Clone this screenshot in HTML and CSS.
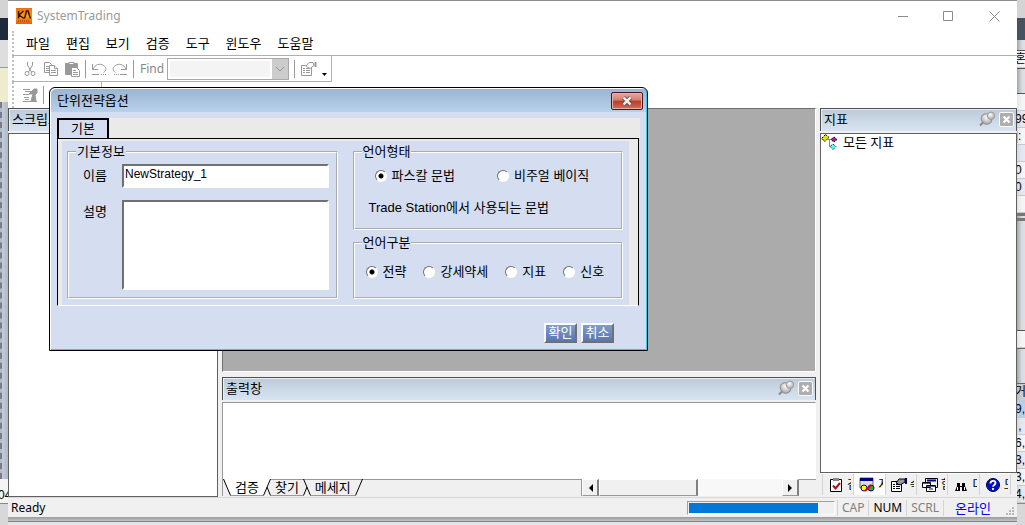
FILE: index.html
```html
<!DOCTYPE html>
<html lang="ko">
<head>
<meta charset="UTF-8">
<meta name="viewport" content="width=device-width, initial-scale=1.0">
<title>SystemTrading</title>
<link rel="stylesheet" href="styles.css">
</head>
<body>
    <svg class="defs" aria-hidden="true">
        <defs>
            <radialGradient id="pinFill" cx="40%" cy="35%" r="70%">
                <stop offset="0" stop-color="#fff"/>
                <stop offset="1" stop-color="#a4a4a4"/>
            </radialGradient>
        </defs>
        <symbol id="pin" viewBox="0 0 17 16">
            <path d="M1 14.500L5 10.500" stroke="#8a8a8a" stroke-width="2"/>
            <ellipse cx="7.500" cy="8" rx="5.500" ry="5" transform="rotate(40 7.500 8)" fill="url(#pinFill)" stroke="#8c8c8c"/>
            <path d="M7 5l4-3 3 5-3 2z" fill="#d4d4d4"/>
            <circle cx="12" cy="4.800" r="3.700" fill="url(#pinFill)" stroke="#9c9c9c"/>
        </symbol>
        <symbol id="closeBox" viewBox="0 0 15 15">
            <rect x=".5" y=".5" width="14" height="14" rx="1.500" fill="#aeaeae" stroke="#fafafa"/>
            <path d="M4.500 4.500l6 6m0-6l-6 6" stroke="#fff" stroke-width="2.200"/>
        </symbol>
    </svg>

    <div class="desktop">
        <div class="backdrop-left" aria-hidden="true">
            <div class="back-gray"></div>
            <div class="back-navy"></div>
            <div class="back-light"></div>
            <div class="back-cream"></div>
            <div class="back-blue"></div>
            <div class="back-cell">04</div>
            <div class="back-foot"></div>
        </div>

        <main class="window">
            <header class="titlebar">
                <svg class="logo" width="16" height="16" viewBox="0 0 16 16">
                    <defs><linearGradient id="logoFill" x2="0" y2="1"><stop offset="0" stop-color="#f06a10"/><stop offset=".5" stop-color="#ff9d10"/><stop offset="1" stop-color="#f05a08"/></linearGradient></defs>
                    <rect width="16" height="16" fill="url(#logoFill)"/>
                    <path d="M2.500 3v7.500M7.500 3L3 7l5 3.500M8.500 10.500l2-7.500h1.500l2.500 7.500" fill="none" stroke="#301808" stroke-width="1.500"/>
                    <path d="M2 13h12" stroke="#803008" stroke-dasharray="1 1"/>
                </svg>
                <h1>SystemTrading</h1>
                <div class="caption-buttons">
                    <button aria-label="Minimize"><svg width="11" height="11"><path d="M1 5.500h10" stroke="#8a8a8a"/></svg></button>
                    <button aria-label="Maximize"><svg width="11" height="11"><path d="M.5 .5h9v9h-9z" fill="none" stroke="#8a8a8a"/></svg></button>
                    <button aria-label="Close"><svg width="11" height="11"><path d="M.5 .5l10 10m0-10l-10 10" stroke="#8a8a8a"/></svg></button>
                </div>
            </header>

            <nav class="menubar">
                <a href="#">파일</a>
                <a href="#">편집</a>
                <a href="#">보기</a>
                <a href="#">검증</a>
                <a href="#">도구</a>
                <a href="#">윈도우</a>
                <a href="#">도움말</a>
            </nav>

            <div class="toolbar toolbar-main">
                <button aria-label="Cut"><svg width="16" height="16" fill="none" stroke="#999"><path d="M5.500 1v3l4 7M10.500 1v3l-4 7"/><circle cx="5" cy="12.500" r="2"/><circle cx="11" cy="12.500" r="2"/></svg></button>
                <button aria-label="Copy"><svg width="16" height="16" fill="#fff" stroke="#999"><path d="M1.500 1.500h5l3 3v7h-8z"/><path d="M3 5.500h3M3 7.500h3M3 9.500h3"/><path d="M6.500 4.500h5l3 3v7h-8z"/><path d="M11.500 4.500v3h3M8 9.500h5M8 11.500h5"/></svg></button>
                <button aria-label="Paste"><svg width="16" height="16" fill="#999" stroke="#999"><path d="M1.500 2.500h12v11h-12z"/><path d="M5 1.500h5v2h-5z" fill="#fff"/><path d="M7.500 6.500h5l3 3v6h-8z" fill="#fff"/><path d="M9 9.500h3M9 11.500h5M9 13.500h5"/></svg></button>
                <span class="divider"></span>
                <button aria-label="Undo"><svg width="16" height="16" fill="none" stroke="#999"><path d="M1.500 3v5.500h5.500M2 8C4 3.500 9 2 12.500 4.500s3 5 0 7M1 13.500h7M10 13.500h1M12 13.500h1M14 13.500h1"/></svg></button>
                <button aria-label="Redo"><svg width="16" height="16" fill="none" stroke="#999"><path d="M14.500 3v5.500H9M14 8C12 3.500 7 2 3.500 4.500s-3 5 0 7M8 13.500h7M6 13.500h1M4 13.500h1M2 13.500h1"/></svg></button>
                <span class="divider"></span>
                <label class="find-label" for="find">Find</label>
                <span class="combo">
                    <select id="find" disabled><option></option></select>
                    <svg width="16" height="20"><path d="M4 8l4 4 4-4" fill="none" stroke="#999"/></svg>
                </span>
                <span class="divider"></span>
                <button aria-label="Properties"><svg width="17" height="16" fill="none" stroke="#999"><path d="M1.500 4.500h10v10h-10zM3 7.500h2M6 7.500h4M3 9.500h2M6 9.500h4M3 11.500h2M6 11.500h4"/><path d="M6 5l3-3.500h4l1 3-4 3-2-1z" fill="#fff"/><path d="M15.500 1v5" stroke-width="2"/></svg></button>
                <button class="more" aria-label="More"><svg width="5" height="3"><path d="M0 0h5L2.500 3z"/></svg></button>
            </div>

            <div class="toolbar toolbar-script">
                <button aria-label="Build"><svg width="16" height="16" fill="none" stroke="#999"><path d="M1 2.500h7M3 4.500h6M1 7.500h6M2 10.500h5M1 14.500h14M3 12.500h4"/><path d="M7 7l5-5h3v4l-2 2 1 6H9l2-7z" fill="#999"/></svg></button>
                <span class="divider"></span>
            </div>

            <div class="workspace">
                <section class="pane script-pane">
                    <header class="pane-title"><h2>스크립트</h2></header>
                    <div class="pane-body"></div>
                </section>

                <div class="center">
                    <div class="mdi"></div>
                    <section class="pane output-pane">
                        <header class="pane-title">
                            <h2>출력창</h2>
                            <button aria-label="Pin"><svg width="17" height="16"><use href="#pin"/></svg></button>
                            <button aria-label="Close"><svg width="15" height="15"><use href="#closeBox"/></svg></button>
                        </header>
                        <div class="pane-body"></div>
                        <div class="output-tabs">
                            <svg width="8" height="17"><path d="M0 0l8 17V0z" fill="#fff"/><path d="M.5 0l7 16.500" stroke="#000"/></svg>
                            <button class="sheet active">검증</button>
                            <svg width="8" height="17"><path d="M0 0h8L0 17z" fill="#fff"/><path d="M7.500 0l-7 16.500M4 8l3.500 8.500" stroke="#000" fill="none"/></svg>
                            <button class="sheet">찾기</button>
                            <svg width="8" height="17"><path d="M.5 0l7 16.500M4 8L.5 16.500" stroke="#000" fill="none"/></svg>
                            <button class="sheet">메세지</button>
                            <svg width="8" height="17"><path d="M7.500 0l-7 16.500" stroke="#000"/></svg>
                            <div class="scrollbar">
                                <button class="raised" aria-label="Scroll left"><svg width="5" height="8"><path d="M5 0v8L1 4z"/></svg></button>
                                <div class="track"><div class="raised thumb"></div></div>
                                <button class="raised" aria-label="Scroll right"><svg width="5" height="8"><path d="M0 0v8l4-4z"/></svg></button>
                            </div>
                        </div>
                    </section>
                </div>

                <section class="pane index-pane">
                    <header class="pane-title">
                        <h2>지표</h2>
                        <button aria-label="Pin"><svg width="17" height="16"><use href="#pin"/></svg></button>
                        <button aria-label="Close"><svg width="15" height="15"><use href="#closeBox"/></svg></button>
                    </header>
                    <div class="pane-body">
                        <a class="tree-root" href="#">
                            <svg width="17" height="17">
                                <path d="M7 5.500h5M8.500 6v6.500h2" stroke="#888" fill="none"/>
                                <path d="M4.500 .5l3.500 3-4 4-3.500-3z" fill="#e8e000" stroke="#000" stroke-dasharray="2 1"/>
                                <path d="M13 3l3 2.500-3 2.500-3-2.500z" fill="#c0178a" stroke="#000" stroke-dasharray="2 1"/>
                                <path d="M12 10l3 2.500-3 3-3-3z" fill="#5ff" stroke="#000" stroke-dasharray="1 1"/>
                            </svg>
                            모든 지표
                        </a>
                    </div>
                    <div class="index-tabs">
                        <button><svg width="16" height="16"><path d="M2.500 2.500h11v12h-11z" fill="#fff" stroke="#000"/><path d="M5 1h6v3H5z" fill="#888"/><path d="M5 8.500l2.500 3L12 6" fill="none" stroke="#b01010" stroke-width="2"/></svg><span>검증</span></button>
                        <button class="active"><svg width="16" height="16"><path d="M1 1h13v10H1z" fill="#ddd" stroke="#666"/><path d="M1 1h13v3H1z" fill="#000080"/><circle cx="5" cy="11" r="3" fill="#ff0" stroke="#00a"/><circle cx="12" cy="11" r="3" fill="#1db030" stroke="#008"/><path d="M6 14l6-6" stroke="#d00" stroke-width="2"/></svg><span>지표</span></button>
                        <button><svg width="16" height="16"><path d="M.5 4.500h10v10H.5z" fill="#fff" stroke="#000"/><path d="M2 7.500h2M5 7.500h4M2 9.500h2M5 9.500h4M2 11.500h2M5 11.500h4" stroke="#000"/><path d="M5 6l3-4h6v3l-5 3z" fill="#999" stroke="#000"/><path d="M15 1v6" stroke="#000080" stroke-width="2"/></svg><span>속성</span></button>
                        <button><svg width="16" height="16"><path d="M3.500 1.500h12v9h-12z" fill="#eee" stroke="#000"/><path d="M5 3.500h9" stroke="#000080" stroke-width="2"/><path d="M.5 5.500h8v5h-8zM4.500 8.500h9v6h-9z" fill="#fff" stroke="#000"/><path d="M1 6.500h7M5 9.500h8" stroke="#557"/><path d="M7 12h4" stroke="#888" stroke-width="2"/></svg><span>함수</span></button>
                        <button><svg width="16" height="16"><path d="M4 6h3v3h2V6h3v3l2 5h-5v-4H7v4H2l2-5z"/><path d="M4.500 10v3M11.500 10v3" stroke="#fff"/></svg><span>디버그</span></button>
                        <button><svg width="16" height="16"><circle cx="8" cy="8" r="6.500" fill="#0010c8" stroke="#000040"/><path d="M5.500 6.500c0-3.500 5-3.500 5-.5 0 2-2.500 1.800-2.500 3.700M8 11v2" fill="none" stroke="#fff" stroke-width="1.800"/></svg><span>도움말</span></button>
                    </div>
                </section>
            </div>

            <footer class="statusbar">
                <span class="status-text">Ready</span>
                <span class="meter"><span class="meter-fill"></span></span>
                <span class="indicator">CAP</span>
                <span class="indicator on">NUM</span>
                <span class="indicator">SCRL</span>
                <span class="indicator online">온라인</span>
                <svg class="grip" width="9" height="9" fill="#b8b8b8"><path d="M6 0h2v2H6zM3 3h2v2H3zM6 3h2v2H6zM0 6h2v2H0zM3 6h2v2H3zM6 6h2v2H6z"/></svg>
            </footer>
        </main>

        <div class="backdrop-right" aria-hidden="true">
            <div class="back-gray"></div>
            <div class="back-slate"></div>
            <div class="back-gap"></div>
            <div class="back-row">혼</div>
            <div class="back-band"></div>
            <div class="back-row"></div>
            <div class="back-row alt">99</div>
            <div class="back-row">|:</div>
            <div class="back-row alt"></div>
            <div class="back-row">0</div>
            <div class="back-row alt">0</div>
            <div class="back-row"></div>
            <div class="back-panel"></div>
            <div class="back-row"></div>
            <div class="back-header"></div>
            <div class="back-row head">거</div>
            <div class="back-row selected">9,</div>
            <div class="back-row alt">&nbsp;,</div>
            <div class="back-row">6,</div>
            <div class="back-row alt">3,</div>
            <div class="back-row">3,</div>
            <div class="back-row alt">4,</div>
            <div class="back-foot"></div>
        </div>
        <div class="backdrop-bottom" aria-hidden="true"></div>
    </div>

    <form class="dialog" role="dialog" aria-labelledby="dialogTitle">
        <header class="dialog-title">
            <h2 id="dialogTitle">단위전략옵션</h2>
            <button type="button" class="dialog-close" aria-label="Close"><svg width="12" height="10"><path d="M2.500 1.500l7 7m0-7l-7 7" stroke="#5a3030" stroke-width="4"/><path d="M2.500 1.500l7 7m0-7l-7 7" stroke="#eee" stroke-width="2.500"/></svg></button>
        </header>
        <div class="tab-strip"><button type="button" class="tab">기본</button></div>
        <div class="tab-panel">
            <fieldset class="basic-info">
                <legend>기본정보</legend>
                <label for="name">이름</label>
                <input type="text" id="name" value="NewStrategy_1">
                <label for="desc">설명</label>
                <textarea id="desc"></textarea>
            </fieldset>
            <div class="language">
                <fieldset class="syntax">
                    <legend>언어형태</legend>
                    <div class="syntax-options">
                        <label><input type="radio" name="syntax" checked>파스칼 문법</label>
                        <label><input type="radio" name="syntax">비주얼 베이직</label>
                    </div>
                    <p>Trade Station에서 사용되는 문법</p>
                </fieldset>
                <fieldset class="kind">
                    <legend>언어구분</legend>
                    <label><input type="radio" name="kind" checked>전략</label>
                    <label><input type="radio" name="kind">강세약세</label>
                    <label><input type="radio" name="kind">지표</label>
                    <label><input type="radio" name="kind">신호</label>
                </fieldset>
            </div>
        </div>
        <div class="dialog-actions">
            <button type="button">확인</button>
            <button type="button">취소</button>
        </div>
    </form>
</body>
</html>
```

FILE: styles.css
```css
* {
    box-sizing: border-box;
}
body {
    margin: 0;
    font-family: "Noto Sans", "Noto Sans CJK KR", sans-serif;
    font-size: 13px;
    line-height: 16px;
    color: #000;
}
h1, h2, p {
    margin: 0;
    font-size: 13px;
    font-weight: normal;
}
a {
    color: inherit;
    text-decoration: none;
}
button, input, select, textarea {
    font: inherit;
    color: inherit;
    margin: 0;
}
button {
    padding: 0;
    border: 0;
    background: none;
}
svg {
    display: block;
    flex: none;
}
.defs {
    position: absolute;
    width: 0;
    height: 0;
}

/* desktop and the windows behind */
.desktop {
    display: grid;
    grid-template-columns: 8px minmax(0, 1fr) 8px;
    grid-template-rows: minmax(0, 1fr) 8px;
    min-height: 100vh;
    background-color: #dcdfe4;
}
.backdrop-left, .backdrop-right {
    display: flex;
    flex-direction: column;
    overflow: hidden;
    grid-row: 1 / 3;
    white-space: nowrap;
    font-family: "Liberation Sans", "Noto Sans CJK KR", sans-serif;
    font-size: 12px;
    text-indent: -2px;
}
.backdrop-right {
    grid-column: 3;
    box-shadow: inset 4px 0 4px -2px #999;
}
.back-gray {
    height: 18px;
    background-color: #d4d4d4;
}
.back-navy {
    height: 22px;
    background-color: #1e2a3c;
}
.back-slate {
    height: 22px;
    background-color: #46525f;
}
.back-light {
    height: 28px;
    background-color: #dedede;
    border-bottom: 1px solid #999;
}
.back-cream {
    height: 34px;
    background-color: #eeebcf;
}
.back-blue {
    flex: 1;
    border-left: 2px dashed #7a7a88;
    background: linear-gradient(to right, #c4ced8, #aeb8c6);
}
.back-cell {
    height: 24px;
    padding-top: 8px;
    background-color: #f4f4f4;
}
.back-foot {
    height: 22px;
    border-top: 1px solid #888;
    background-color: #d8d8d8;
}
.back-gap {
    height: 11px;
    border-bottom: 1px solid #555;
}
.back-row {
    height: 17px;
    overflow: hidden;
    border-bottom: 1px solid #c8c8c8;
    background-color: rgba(255, 255, 255, 0.7);
}
.back-row.alt {
    background-color: rgba(232, 236, 246, 0.7);
}
.back-row.head {
    background-color: rgba(200, 200, 200, 0.7);
}
.back-row.selected {
    background-color: #b4d0ec;
}
.back-band {
    height: 26px;
    border-top: 1px solid #555;
    border-bottom: 1px solid #555;
}
.back-panel {
    flex: 1;
    border-top: 8px double #777;
    border-bottom: 1px solid #555;
}
.back-header {
    height: 36px;
    border-top: 1px solid #666;
    border-bottom: 1px solid #666;
}
.backdrop-bottom {
    grid-column: 2;
    background: linear-gradient(#9a9a9a, #c4c4c4 4px, #7c848c 4px, #7c848c 5px, #e2e4e8 5px);
}

/* main window */
.window {
    display: flex;
    flex-direction: column;
    grid-column: 2;
    grid-row: 1;
    border-top: 1px solid #8c8c8c;
    background-color: #fff;
}
.titlebar {
    display: flex;
    align-items: center;
    height: 30px;
    padding-left: 8px;
    gap: 5px;
}
.titlebar h1 {
    flex: 1;
    font-size: 12px;
    color: #999;
}
.caption-buttons {
    display: flex;
}
.caption-buttons button {
    display: flex;
    align-items: center;
    justify-content: center;
    width: 46px;
    height: 30px;
}
.menubar {
    display: flex;
    align-items: center;
    height: 25px;
    gap: 16px;
    margin-left: 4px;
    padding-left: 12px;
    border-left: 2px dotted #c0c0c0;
    border-bottom: 1px solid #b0b0b0;
}
.toolbar {
    display: flex;
    align-items: center;
    align-self: flex-start;
    height: 26px;
    margin-left: 4px;
    padding-left: 8px;
    border-left: 2px dotted #c0c0c0;
    border-right: 1px solid #b0b0b0;
    border-bottom: 1px solid #b0b0b0;
    gap: 5px;
}
.toolbar-main {
    padding-right: 4px;
}
.toolbar-script {
    width: 90px;
    border-bottom: 0;
}
.divider {
    width: 1px;
    height: 18px;
    background-color: #999;
}
.find-label {
    padding-left: 1px;
    font-size: 12px;
    color: #888;
}
.combo {
    display: flex;
    width: 122px;
    height: 22px;
    margin-left: -2px;
    border: 1px solid #a8a8a8;
}
.combo select {
    flex: 1;
    min-width: 0;
    appearance: none;
    border: 2px solid #fff;
    border-radius: 0;
    background-color: #f0f0f0;
}
.combo svg {
    background-color: #ccc;
}
.more {
    align-self: flex-end;
    padding-bottom: 5px;
}

/* docked panes */
.workspace {
    display: flex;
    flex: 1;
    min-height: 0;
    gap: 4px;
    background-color: #f0f0f0;
}
.pane {
    display: flex;
    flex-direction: column;
    min-height: 0;
}
.pane-title {
    display: flex;
    align-items: center;
    height: 23px;
    margin-bottom: 2px;
    padding: 0 2px 2px 3px;
    gap: 3px;
    border: 1px solid #505050;
    border-bottom: 0;
    background: linear-gradient(#bccad8, #d8e4f2);
    box-shadow: inset 1px 1px 0 #e8eef4;
}
.pane-title h2 {
    flex: 1;
}
.pane-body {
    flex: 1;
    border: 1px solid #606060;
    background-color: #fff;
}
.script-pane {
    width: 210px;
}
.center {
    display: flex;
    flex-direction: column;
    flex: 1;
    min-width: 0;
}
.mdi {
    flex: 1;
    margin-bottom: 5px;
    border: 1px solid #707070;
    border-right-color: #fff;
    border-bottom-color: #fff;
    background-color: #ababab;
}
.output-pane {
    height: 120px;
    padding-bottom: 1px;
}
.output-pane .pane-body {
    border-color: #999 transparent transparent #999;
    border-bottom: 0;
}
.output-tabs {
    display: flex;
    height: 17px;
    border-left: 1px solid #999;
    background: linear-gradient(#999, #999) top / 100% 1px no-repeat #f0f0f0;
}
.sheet {
    padding: 0 4px;
    border-bottom: 1px solid #999;
    line-height: 15px;
}
.sheet.active {
    background-color: #fff;
}
.scrollbar {
    display: flex;
    width: 218px;
    margin-left: auto;
    margin-right: 17px;
    border-left: 1px solid #999;
}
.raised {
    display: flex;
    align-items: center;
    justify-content: center;
    border: 1px solid #fff;
    border-right: 2px solid #808080;
    border-bottom-color: #999;
    background-color: #f0f0f0;
}
.scrollbar button {
    width: 17px;
}
.track {
    display: flex;
    flex: 1;
    background-color: #f8f8f8;
}
.thumb {
    width: 54%;
}
.index-pane {
    width: 197px;
}
.tree-root {
    display: flex;
    align-items: flex-start;
    gap: 5px;
}
.index-tabs {
    display: flex;
    height: 24px;
    margin: 0 6px 0 2px;
    padding-bottom: 2px;
    border-top: 1px solid #fff;
}
.index-tabs button {
    display: flex;
    align-items: center;
    flex: 1;
    min-width: 0;
    gap: 3px;
    padding: 0 2px 0 5px;
    border-left: 1px solid #d4d4d4;
}
.index-tabs button:last-child {
    border-right: 1px solid #d4d4d4;
}
.index-tabs .active {
    background-color: #fff;
}
.index-tabs span {
    flex: 1;
    min-width: 0;
    overflow: hidden;
    white-space: nowrap;
    font-size: 12px;
    text-align: left;
}

/* status bar */
.statusbar {
    display: flex;
    align-items: center;
    height: 20px;
    border-top: 1px solid #d8d8d8;
    background-color: #f0f0f0;
    font-size: 12px;
}
.status-text {
    flex: 1;
    padding-left: 3px;
}
.meter {
    width: 148px;
    height: 14px;
    padding: 1px;
    border: 1px solid #a0a0a0;
    border-right-color: #fff;
    border-bottom-color: #fff;
    margin-right: 2px;
}
.meter-fill {
    display: block;
    width: 90%;
    height: 10px;
    background-color: #0078d7;
}
.indicator {
    padding: 0 4px;
    border-left: 1px solid #d4d4d4;
    color: #808080;
}
.indicator.on {
    color: #000;
}
.indicator.online {
    padding: 0 15px 0 11px;
    font-size: 13px;
    color: #0000ff;
}
.grip {
    align-self: flex-end;
    margin: 0 2px 1px 0;
}

/* strategy option dialog, floats over the window */
.dialog {
    position: absolute;
    left: 49px;
    top: 87px;
    width: 599px;
    padding: 1px 7px 7px;
    border: 1px solid #000;
    border-radius: 6px 6px 0 0;
    background: linear-gradient(#99b4d1, #b9d1ea 24px, #d4def0 24px);
    box-shadow: inset 1px 1px 0 #fff, inset -1px -1px 0 #3cc4e4;
    font-family: "Liberation Sans", "Noto Sans CJK KR", sans-serif;
}
.dialog-title {
    display: flex;
    align-items: center;
    justify-content: space-between;
    height: 24px;
    margin-right: -3px;
}
.dialog-close {
    display: flex;
    align-items: center;
    justify-content: center;
    width: 32px;
    height: 18px;
    border: 1px solid #4a1420;
    border-radius: 2px;
    background: linear-gradient(#e8a89c, #d08070 45%, #b83c24 50%, #d07060);
    box-shadow: inset 0 0 0 1px #e4b0a8;
}
.tab-strip {
    display: flex;
    height: 20px;
    margin-top: 5px;
    background-color: #eaeae8;
}
.tab {
    width: 52px;
    border: 2px solid #000;
    border-bottom: 0;
    background-color: #d4def0;
}
.tab-panel {
    display: grid;
    grid-template-columns: 1fr 1fr;
    gap: 15px;
    margin-right: 1px;
    padding: 5px 15px 6px 9px;
    border: 1px solid #000;
    border-bottom-color: #fff;
    box-shadow: inset 4px 0 0 #eaeae8, inset -9px 0 0 #eaeae8, inset 0 2px 0 #eaeae8;
}
fieldset {
    min-width: 0;
    margin: 0;
    border: 2px groove #fff;
}
legend {
    margin-left: 7px;
    padding: 0 1px;
}
.basic-info {
    display: grid;
    grid-template-columns: 39px 1fr;
    grid-template-rows: 24px 90px;
    gap: 12px 0;
    padding: 4px 7px 7px 14px;
}
.basic-info label {
    padding-top: 4px;
}
.basic-info legend {
    margin-left: -7px;
}
.basic-info input, .basic-info textarea {
    width: 100%;
    border: 2px solid #fff;
    border-top-color: #707070;
    border-left-color: #707070;
    border-radius: 0;
    background-color: #fff;
    outline: 0;
}
.basic-info input {
    padding: 0 1px 4px;
    font-size: 12px;
}
.basic-info textarea {
    resize: none;
}
.language {
    display: flex;
    flex-direction: column;
    justify-content: space-between;
}
.language label {
    display: flex;
    align-items: center;
    gap: 5px;
}
.syntax {
    padding: 8px 0 12px;
}
.syntax-options {
    display: flex;
    gap: 42px;
    margin-bottom: 16px;
    padding-left: 20px;
}
.syntax p {
    padding-left: 14px;
}
.kind {
    display: flex;
    gap: 17px;
    padding: 13px 0 17px 11px;
}
.kind legend {
    margin-left: -4px;
}
input[type="radio"] {
    width: 12px;
    height: 12px;
    appearance: none;
    border: 1px solid #fff;
    border-top-color: #707070;
    border-left-color: #707070;
    border-radius: 50%;
    background-color: #fff;
}
input[type="radio"]:checked {
    background-image: radial-gradient(circle, #000 2px, transparent 3px);
}
.dialog-actions {
    display: flex;
    justify-content: flex-end;
    gap: 4px;
    padding: 17px 26px 0 0;
}
.dialog-actions button {
    width: 33px;
    height: 20px;
    border: 2px solid #fff;
    border-right-color: #707070;
    border-bottom-color: #707070;
    background: linear-gradient(#809ccc, #5878b0);
    color: #fff;
    line-height: 14px;
}
```
